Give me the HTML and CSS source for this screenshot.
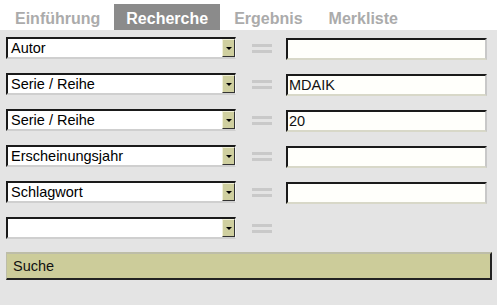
FILE: index.html
```html
<!DOCTYPE html>
<html>
<head>
<meta charset="utf-8">
<link rel="stylesheet" href="styles.css">
</head>
<body>
<div class="tabs">
  <div class="tab">Einführung</div>
  <div class="tab active">Recherche</div>
  <div class="tab">Ergebnis</div>
  <div class="tab">Merkliste</div>
</div>
<div class="panel">
  <div class="row">
    <div class="select"><span class="val">Autor</span><span class="btn"><span class="tri"></span></span></div>
    <div class="eq"><span></span><span></span></div>
    <div class="input"></div>
  </div>
  <div class="row">
    <div class="select"><span class="val">Serie / Reihe</span><span class="btn"><span class="tri"></span></span></div>
    <div class="eq"><span></span><span></span></div>
    <div class="input">MDAIK</div>
  </div>
  <div class="row">
    <div class="select"><span class="val">Serie / Reihe</span><span class="btn"><span class="tri"></span></span></div>
    <div class="eq"><span></span><span></span></div>
    <div class="input">20</div>
  </div>
  <div class="row">
    <div class="select"><span class="val">Erscheinungsjahr</span><span class="btn"><span class="tri"></span></span></div>
    <div class="eq"><span></span><span></span></div>
    <div class="input"></div>
  </div>
  <div class="row">
    <div class="select"><span class="val">Schlagwort</span><span class="btn"><span class="tri"></span></span></div>
    <div class="eq"><span></span><span></span></div>
    <div class="input"></div>
  </div>
  <div class="row">
    <div class="select"><span class="val"></span><span class="btn"><span class="tri"></span></span></div>
    <div class="eq"><span></span><span></span></div>
  </div>
  <div class="search">Suche</div>
</div>
</body>
</html>
```
FILE: styles.css
```css
html, body {
  margin: 0;
  padding: 0;
  background: #e4e4e4;
  font-family: "Liberation Sans", Arial, sans-serif;
}
body {
  width: 497px;
  height: 305px;
  overflow: hidden;
}
.tabs {
  background: #ffffff;
  height: 30px;
  display: flex;
  align-items: flex-end;
  gap: 2px;
  padding-left: 3px;
  box-sizing: border-box;
}
.tab {
  height: 26px;
  box-sizing: border-box;
  padding: 3px 12px 0;
  line-height: 23px;
  font-size: 16px;
  font-weight: bold;
  color: #ababab;
}
.tab.active {
  background: #8b8b8b;
  color: #ffffff;
}
.panel {
  padding: 7px 0 0 6px;
  display: flex;
  flex-direction: column;
  gap: 14px;
}
.row {
  display: flex;
  align-items: flex-start;
  height: 22px;
}
.select {
  width: 230px;
  height: 22px;
  box-sizing: border-box;
  background: #ffffff;
  border-top: 2px solid #1a1a1a;
  border-left: 2px solid #1a1a1a;
  border-right: 1px solid #f4f4f4;
  border-bottom: 2px solid #cfcfcf;
  display: flex;
  align-items: stretch;
  font-size: 14.5px;
  color: #000;
}
.val {
  flex: 1;
  padding-left: 3px;
  line-height: 18px;
}
.btn {
  width: 13px;
  background: #cfcf9f;
  border-top: 1px solid #f0f0d8;
  border-left: 1px solid #f0f0d8;
  border-right: 1px solid #333;
  border-bottom: 1px solid #333;
  box-sizing: border-box;
  display: flex;
  align-items: center;
  justify-content: center;
}
.tri {
  width: 0;
  height: 0;
  border-left: 3px solid transparent;
  border-right: 3px solid transparent;
  border-top: 3px solid #000;
}
.eq {
  width: 50px;
  height: 22px;
  display: flex;
  flex-direction: column;
  align-items: center;
  justify-content: center;
  gap: 3px;
  padding-left: 2px;
  box-sizing: border-box;
}
.eq span {
  width: 20px;
  height: 3px;
  background: #c9c9c9;
}
.input {
  margin-top: 1px;
  width: 201px;
  height: 22px;
  box-sizing: border-box;
  background: #fffffb;
  border-top: 2px solid #1a1a1a;
  border-left: 2px solid #1a1a1a;
  border-right: 2px solid #c8c8c8;
  border-bottom: 2px solid #d8d8c8;
  font-size: 14.5px;
  line-height: 18px;
  padding-left: 1px;
  color: #111;
}
.search {
  margin-top: -1px;
  width: 486px;
  height: 28px;
  box-sizing: border-box;
  background: #cccc9a;
  border-top: 2px solid #bdbda8;
  border-left: 1px solid #bdbda8;
  border-right: 2px solid #222;
  border-bottom: 2px solid #222;
  font-size: 14.5px;
  line-height: 24px;
  padding-left: 6px;
  color: #111;
}
```
